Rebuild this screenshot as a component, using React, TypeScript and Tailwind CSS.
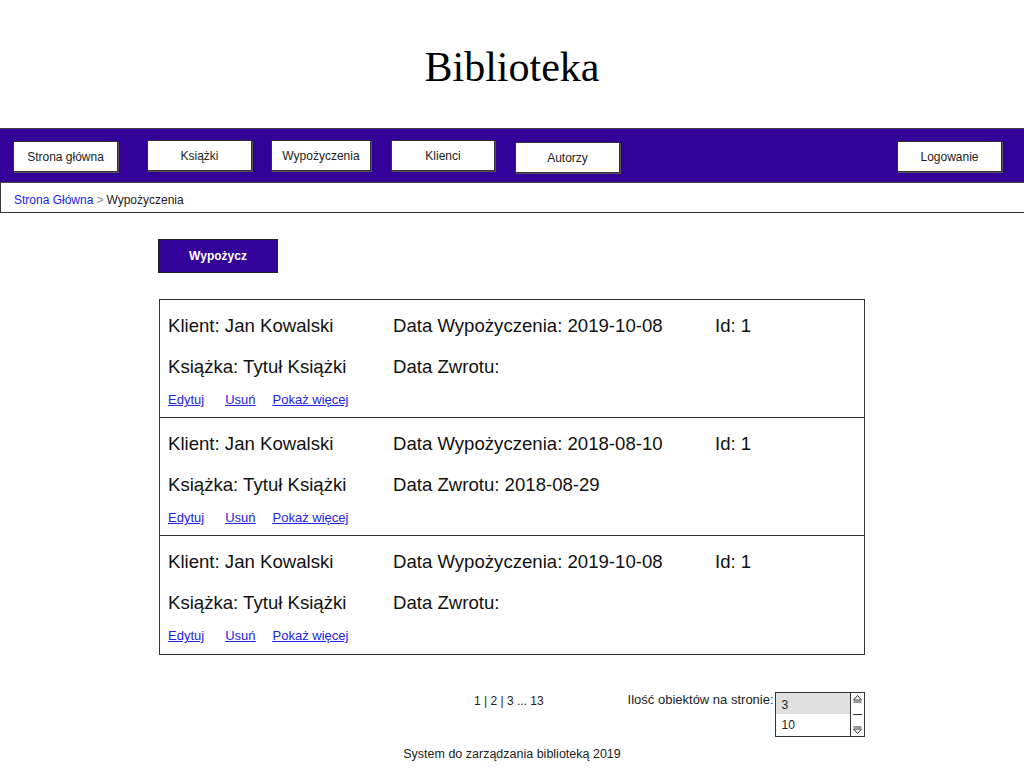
import React from "react";

const font = { fontFamily: "'Liberation Sans', Arial, sans-serif" };

const navLeft = [
  { label: "Strona główna", cls: "w-[105px] mt-[1px]" },
  { label: "Książki", cls: "w-[105px] ml-[29px]" },
  { label: "Wypożyczenia", cls: "w-[100px] ml-[19px]" },
  { label: "Klienci", cls: "w-[104px] ml-[20px]" },
  { label: "Autorzy", cls: "w-[105px] ml-[20px] mt-[2px]" },
];

const rentals = [
  { client: "Jan Kowalski", book: "Tytuł Książki", from: "2019-10-08", to: "", id: 1 },
  { client: "Jan Kowalski", book: "Tytuł Książki", from: "2018-08-10", to: "2018-08-29", id: 1 },
  { client: "Jan Kowalski", book: "Tytuł Książki", from: "2019-10-08", to: "", id: 1 },
];

function NavButton({ label, cls }: { label: string; cls?: string }) {
  return (
    <div
      className={`h-[31px] bg-white border border-[#333] shadow-[1px_1px_0_#555] flex items-center justify-center text-[12px] text-[#222] ${cls ?? ""}`}
    >
      {label}
    </div>
  );
}

function Row({ r, last }: { r: (typeof rentals)[number]; last: boolean }) {
  return (
    <div className={`h-[118px] pl-[8px] pt-[15px] ${last ? "" : "border-b border-[#333]"}`}>
      <div className="flex h-[22px] items-center text-[18.6px] text-[#111]">
        <span className="w-[225px]">Klient: {r.client}</span>
        <span className="w-[322px]">Data Wypożyczenia: {r.from}</span>
        <span>Id: {r.id}</span>
      </div>
      <div className="flex h-[22px] items-center text-[18.6px] text-[#111] mt-[19px]">
        <span className="w-[225px]">Książka: {r.book}</span>
        <span>Data Zwrotu:{r.to ? ` ${r.to}` : ""}</span>
      </div>
      <div className="flex mt-[12px] text-[13px] text-[#2222ee] underline">
        <a href="#">Edytuj</a>
        <a href="#" className="ml-[21px]">Usuń</a>
        <a href="#" className="ml-[17px]">Pokaż więcej</a>
      </div>
    </div>
  );
}

function Arrow({ up }: { up: boolean }) {
  return (
    <svg width="11" height="9" viewBox="0 0 11 9">
      {up ? (
        <>
          <path d="M1.5 6 L5.5 1.5 L9.5 6 Z" fill="none" stroke="#333" strokeWidth="1" />
          <path d="M1.5 8 H9.5" stroke="#333" strokeWidth="1" />
        </>
      ) : (
        <>
          <path d="M1.5 3 L5.5 7.5 L9.5 3 Z" fill="none" stroke="#333" strokeWidth="1" />
          <path d="M1.5 1 H9.5" stroke="#333" strokeWidth="1" />
        </>
      )}
    </svg>
  );
}

export default function App() {
  return (
    <div className="w-[1024px] h-[768px] bg-white overflow-hidden" style={font}>
      {/* Title */}
      <div className="h-[128px] flex justify-center pt-[46px]">
        <h1
          className="text-[42px] leading-none text-black"
          style={{ fontFamily: "'Liberation Serif', 'Times New Roman', serif" }}
        >
          Biblioteka
        </h1>
      </div>

      {/* Nav */}
      <div className="h-[55px] bg-[#330099] border-y border-[#444] flex items-start pt-[11px] pl-[13px] pr-[22px]">
        <div className="flex">
          {navLeft.map((n) => (
            <NavButton key={n.label} label={n.label} cls={n.cls} />
          ))}
        </div>
        <div className="ml-auto">
          <NavButton label="Logowanie" cls="w-[105px] mt-[1px]" />
        </div>
      </div>

      {/* Breadcrumb */}
      <div className="h-[30px] border-b border-l border-[#333] flex items-center pl-[13px] pt-[5px] text-[12px]">
        <span className="text-[#2222ee]">Strona Główna</span>
        <span className="text-[#888] mx-[3px]">&gt;</span>
        <span className="text-[#222]">Wypożyczenia</span>
      </div>

      {/* Content */}
      <div className="pl-[158px] pt-[26px]">
        <button className="w-[120px] h-[34px] bg-[#330099] border border-[#222] text-white text-[12px] font-bold">
          Wypożycz
        </button>

        <div className="mt-[26px] ml-[1px] w-[706px] border border-[#333]">
          {rentals.map((r, i) => (
            <Row key={i} r={r} last={i === rentals.length - 1} />
          ))}
        </div>

        <div className="flex items-start mt-[35px]">
          <div className="ml-[316px] mt-[2px] text-[12px] text-[#222]">1 | 2 | 3 ... 13</div>
          <div className="ml-[84px] text-[13px] text-[#222]">Ilość obiektów na stronie:</div>
          <div className="ml-[1px] mt-[2px] w-[90px] h-[45px] border border-[#333] flex text-[12px] text-[#222]">
            <div className="flex-1 flex flex-col">
              <div className="h-[21px] bg-[#e0e0e0] pl-[6px] flex items-end">3</div>
              <div className="h-[22px] pl-[6px] flex items-center">10</div>
            </div>
            <div className="w-[14px] border-l border-[#333] flex flex-col items-center justify-between py-[1px]">
              <Arrow up />
              <div className="w-[9px] h-[1px] bg-[#333]" />
              <Arrow up={false} />
            </div>
          </div>
        </div>
      </div>

      {/* Footer */}
      <div className="mt-[8px] text-center text-[12.5px] text-[#222]">
        System do zarządzania biblioteką 2019
      </div>
    </div>
  );
}
